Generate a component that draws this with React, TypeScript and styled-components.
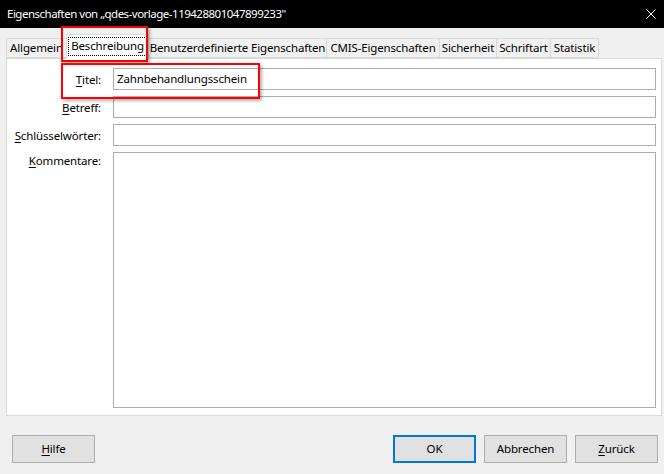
import styled, { createGlobalStyle } from 'styled-components'

const GlobalStyle = createGlobalStyle`
  html, body {
    margin: 0;
    padding: 0;
    background: #f0f0f0;
  }
  body {
    font-family: "Noto Sans", "Open Sans", "DejaVu Sans", sans-serif;
    font-size: 11.5px;
    color: #000;
  }
`

const Dialog = styled.div`
  position: relative;
  width: 664px;
  height: 474px;
  background: #f0f0f0;
  display: flex;
  flex-direction: column;
  overflow: hidden;
`

const TitleBar = styled.div`
  height: 27px;
  background: #000;
  color: #fff;
  display: flex;
  align-items: center;
  justify-content: space-between;
  padding: 0 4px 1px 7px;
  letter-spacing: -0.5px;
`

const CloseButton = styled.div`
  width: 14px;
  height: 14px;
  display: flex;
  align-items: center;
  justify-content: center;
  margin-right: 2px;
`

const Body = styled.div`
  padding: 6px 2px 0 6px;
  display: flex;
  flex-direction: column;
`

const TabStrip = styled.div`
  display: flex;
  align-items: flex-end;
  height: 24px;
  position: relative;
  z-index: 1;
`

const Tab = styled.div<{ $w: number; $active?: boolean }>`
  width: ${(p) => p.$w}px;
  box-sizing: border-box;
  height: ${(p) => (p.$active ? 25 : 20)}px;
  margin-left: -1px;
  margin-bottom: ${(p) => (p.$active ? -1 : 0)}px;
  border: 1px solid #d9d9d9;
  border-bottom: ${(p) => (p.$active ? 'none' : '1px solid #d9d9d9')};
  background: ${(p) => (p.$active ? '#fff' : '#f0f0f0')};
  display: flex;
  align-items: center;
  justify-content: center;
  white-space: nowrap;
  letter-spacing: -0.15px;
  padding-bottom: ${(p) => (p.$active ? 2 : 1)}px;

  &:first-child {
    margin-left: 0;
  }
`

const FocusRing = styled.span`
  outline: 1px dotted #000;
  outline-offset: 0;
  padding: 1px 2px 2px;
  line-height: 14px;
`

const Panel = styled.div`
  height: 358px;
  box-sizing: border-box;
  border: 1px solid #d9d9d9;
  background: #fff;
  display: grid;
  grid-template-columns: 94px 1fr;
  grid-template-rows: 22px 22px 22px 1fr;
  column-gap: 12px;
  row-gap: 6px;
  padding: 9px 5px 7px 0;
`

const Label = styled.label<{ $top?: boolean }>`
  display: flex;
  justify-content: flex-end;
  align-items: ${(p) => (p.$top ? 'flex-start' : 'center')};
  padding-top: ${(p) => (p.$top ? 1 : 0)}px;
  white-space: nowrap;
  letter-spacing: -0.15px;

  u {
    text-underline-offset: 2px;
  }
`

const Field = styled.div`
  box-sizing: border-box;
  border: 1px solid #adadad;
  background: #fff;
  display: flex;
  align-items: center;
  padding: 0 3px 1px;
  letter-spacing: -0.15px;
`

const Footer = styled.div`
  display: flex;
  padding: 19px 6px 0 12px;
  gap: 8px;
`

const Spacer = styled.div`
  flex: 1;
`

const Button = styled.button<{ $default?: boolean }>`
  width: 83px;
  height: 28px;
  box-sizing: border-box;
  background: #e1e1e1;
  border: ${(p) => (p.$default ? '2px solid #0078d7' : '1px solid #adadad')};
  font: inherit;
  letter-spacing: -0.15px;
  color: #000;
  padding: 0 0 1px;

  u {
    text-underline-offset: 2px;
  }
`

// annotation frames drawn over the dialog
const Marker = styled.div<{ $x: number; $y: number; $w: number; $h: number }>`
  position: absolute;
  left: ${(p) => p.$x}px;
  top: ${(p) => p.$y}px;
  width: ${(p) => p.$w}px;
  height: ${(p) => p.$h}px;
  box-sizing: border-box;
  border: 2px solid #ff0000;
  box-shadow: 2px 2px 3px rgba(0, 0, 0, 0.3);
  z-index: 5;
  pointer-events: none;
`

const tabs = [
  { label: 'Allgemein', w: 61 },
  { label: 'Beschreibung', w: 83, active: true },
  { label: 'Benutzerdefinierte Eigenschaften', w: 179 },
  { label: 'CMIS-Eigenschaften', w: 114 },
  { label: 'Sicherheit', w: 58 },
  { label: 'Schriftart', w: 55 },
  { label: 'Statistik', w: 49 },
]

const App = () => {
  return (
    <>
      <GlobalStyle />
      <Dialog>
        <TitleBar>
          <span>Eigenschaften von „qdes-vorlage-119428801047899233"</span>
          <CloseButton>
            <svg width="10" height="10" viewBox="0 0 10 10">
              <path d="M0.5 0.5 L9.5 9.5 M9.5 0.5 L0.5 9.5" stroke="#fff" strokeWidth="1" />
            </svg>
          </CloseButton>
        </TitleBar>
        <Body>
          <TabStrip>
            {tabs.map((t) => (
              <Tab key={t.label} $w={t.w} $active={t.active}>
                {t.active ? <FocusRing>{t.label}</FocusRing> : t.label}
              </Tab>
            ))}
          </TabStrip>
          <Panel>
            <Label>
              <span><u>T</u>itel:</span>
            </Label>
            <Field>Zahnbehandlungsschein</Field>
            <Label>
              <span><u>B</u>etreff:</span>
            </Label>
            <Field />
            <Label>
              <span><u>S</u>chlüsselwörter:</span>
            </Label>
            <Field />
            <Label $top>
              <span><u>K</u>ommentare:</span>
            </Label>
            <Field />
          </Panel>
        </Body>
        <Footer>
          <Button><u>H</u>ilfe</Button>
          <Spacer />
          <Button $default>OK</Button>
          <Button>Abbrechen</Button>
          <Button><u>Z</u>urück</Button>
        </Footer>
        <Marker $x={61} $y={26} $w={87} $h={36} />
        <Marker $x={61} $y={63} $w={199} $h={36} />
      </Dialog>
    </>
  )
}

export default App
